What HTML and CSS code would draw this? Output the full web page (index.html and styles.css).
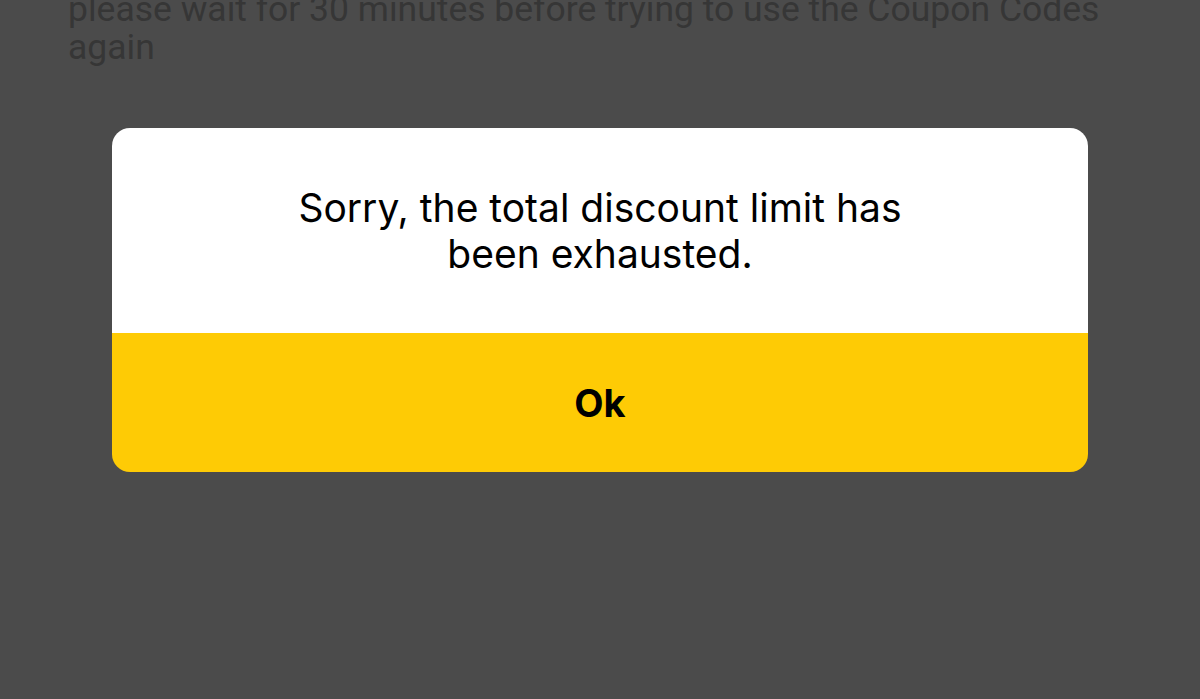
FILE: index.html
```html
<!DOCTYPE html>
<html lang="en">
<head>
    <meta charset="UTF-8">
    <title>Coupon</title>
    <link rel="stylesheet" href="styles.css">
</head>
<body>

    <p class="note">please wait for 30 minutes before trying to use the Coupon Codes again</p>

    <div class="dialog">
        <div class="dialog-body">
            <p class="msg">Sorry, the total discount limit has<br>been exhausted.</p>
        </div>
        <button class="ok">Ok</button>
    </div>

</body>
</html>
```

FILE: styles.css
```css
html, body {
    margin: 0;
    padding: 0;
}

body {
    background-color: #4b4b4b;
    height: 699px;
    overflow: hidden;
}

.note {
    margin: -10px 0 0 0;
    padding: 0 60px 0 68px;
    font-family: Roboto, "Liberation Sans", sans-serif;
    font-size: 35.5px;
    line-height: 38px;
    color: #363636;
}

.dialog {
    width: 976px;
    margin: 62px auto 0 auto;
    border-radius: 18px;
    overflow: hidden;
    display: flex;
    flex-direction: column;
}

.dialog-body {
    background-color: #ffffff;
    height: 205px;
    display: flex;
    align-items: center;
    justify-content: center;
}

.msg {
    margin: 0;
    text-align: center;
    font-family: Inter, "Liberation Sans", sans-serif;
    font-size: 39px;
    line-height: 46px;
    color: #000000;
}

.ok {
    background-color: #fecb05;
    border: none;
    height: 139px;
    padding: 0;
    font-family: Inter, "Liberation Sans", sans-serif;
    font-weight: bold;
    font-size: 38px;
    color: #000000;
    cursor: pointer;
}
```
